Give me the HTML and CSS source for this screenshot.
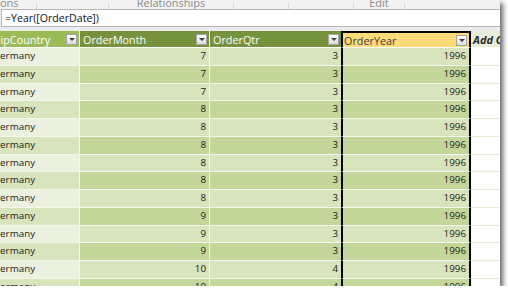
FILE: index.html
```html
<!DOCTYPE html>
<html lang="en">

<head>
    <meta charset="UTF-8">
    <title>PowerPivot - OrderYear</title>
    <link rel="stylesheet" href="styles.css">
</head>

<body>
    <div class="window">
        <div class="ribbon">
            <div class="group g-calc"><span>ons</span></div>
            <div class="group g-blank"></div>
            <div class="group g-rel"><span>Relationships</span></div>
            <div class="group g-blank2"></div>
            <div class="group g-blank3"></div>
            <div class="group g-edit"><span>Edit</span></div>
            <div class="group g-rest"></div>
        </div>

        <div class="formula-row">
            <div class="formula">=Year([OrderDate])</div>
        </div>

        <div class="sheet">
            <div class="row head">
                <div class="cell country"><span>ShipCountry</span><i class="drop"></i></div>
                <div class="cell calc"><span>OrderMonth</span><i class="drop"></i></div>
                <div class="cell calc qtr"><span>OrderQtr</span><i class="drop"></i></div>
                <div class="cell year"><span>OrderYear</span><i class="drop"></i></div>
                <div class="cell add"><span>Add Column</span></div>
            </div>

            <div class="row odd"><div class="cell country">Germany</div><div class="cell num">7</div><div class="cell num qtr">3</div><div class="cell num year">1996</div><div class="cell add"></div></div>
            <div class="row even"><div class="cell country">Germany</div><div class="cell num">7</div><div class="cell num qtr">3</div><div class="cell num year">1996</div><div class="cell add"></div></div>
            <div class="row odd"><div class="cell country">Germany</div><div class="cell num">7</div><div class="cell num qtr">3</div><div class="cell num year">1996</div><div class="cell add"></div></div>
            <div class="row even"><div class="cell country">Germany</div><div class="cell num">8</div><div class="cell num qtr">3</div><div class="cell num year">1996</div><div class="cell add"></div></div>
            <div class="row odd"><div class="cell country">Germany</div><div class="cell num">8</div><div class="cell num qtr">3</div><div class="cell num year">1996</div><div class="cell add"></div></div>
            <div class="row even"><div class="cell country">Germany</div><div class="cell num">8</div><div class="cell num qtr">3</div><div class="cell num year">1996</div><div class="cell add"></div></div>
            <div class="row odd"><div class="cell country">Germany</div><div class="cell num">8</div><div class="cell num qtr">3</div><div class="cell num year">1996</div><div class="cell add"></div></div>
            <div class="row even"><div class="cell country">Germany</div><div class="cell num">8</div><div class="cell num qtr">3</div><div class="cell num year">1996</div><div class="cell add"></div></div>
            <div class="row odd"><div class="cell country">Germany</div><div class="cell num">8</div><div class="cell num qtr">3</div><div class="cell num year">1996</div><div class="cell add"></div></div>
            <div class="row even"><div class="cell country">Germany</div><div class="cell num">9</div><div class="cell num qtr">3</div><div class="cell num year">1996</div><div class="cell add"></div></div>
            <div class="row odd"><div class="cell country">Germany</div><div class="cell num">9</div><div class="cell num qtr">3</div><div class="cell num year">1996</div><div class="cell add"></div></div>
            <div class="row even"><div class="cell country">Germany</div><div class="cell num">9</div><div class="cell num qtr">3</div><div class="cell num year">1996</div><div class="cell add"></div></div>
            <div class="row odd"><div class="cell country">Germany</div><div class="cell num">10</div><div class="cell num qtr">4</div><div class="cell num year">1996</div><div class="cell add"></div></div>
            <div class="row even"><div class="cell country">Germany</div><div class="cell num">10</div><div class="cell num qtr">4</div><div class="cell num year">1996</div><div class="cell add"></div></div>
        </div>
    </div>
</body>

</html>
```

FILE: styles.css
```css
body {
    margin: 0;
    background: #ffffff;
    font-family: 'Open Sans', 'Liberation Sans', sans-serif;
}

.window {
    width: 500px;
    height: 286px;
    overflow: hidden;
    background: #ececec;
    box-shadow: 3px 3px 5px rgba(0, 0, 0, 0.6);
}

/* ribbon group captions, only the lower half shows */
.ribbon {
    display: flex;
    height: 9px;
    overflow: hidden;
    background: #f2f2f2;
}

.group {
    display: flex;
    justify-content: center;
    border-right: 1px solid #d6d6d6;
    height: 6px;
    margin-top: 3px;
}

.group span {
    font-size: 11px;
    line-height: 11px;
    color: #8a8a8a;
    margin-top: -6px;
}

.g-calc {
    width: 36px;
    justify-content: flex-start;
}

.g-blank {
    width: 71px;
}

.g-rel {
    width: 124px;
}

.g-blank2 {
    width: 54px;
}

.g-blank3 {
    width: 64px;
}

.g-edit {
    width: 50px;
}

.g-rest {
    flex: 1;
    border-right: none;
}

.formula-row {
    height: 22px;
    padding-left: 1px;
    box-sizing: border-box;
    background: #ececec;
}

.formula {
    height: 18px;
    box-sizing: border-box;
    background: #ffffff;
    border: 1px solid #b6b6b6;
    border-right: none;
    padding-left: 3px;
    font-size: 10.6px;
    line-height: 16px;
    color: #111111;
}

/* grid */
.sheet {
    margin-left: -14px;
}

.row {
    display: grid;
    grid-template-columns: 94px 130px 131px 130px 50px;
    height: 17.75px;
    font-size: 9.8px;
    color: #1a1a1a;
}

.cell {
    box-sizing: border-box;
    border-right: 1px solid #f4f7ee;
    border-bottom: 1px solid #f4f7ee;
    line-height: 16px;
    white-space: nowrap;
    overflow: hidden;
}

.country {
    padding-left: 7px;
}

.num {
    text-align: right;
    padding-right: 3px;
}

.qtr {
    border-right: none;
}

.year {
    border-left: 2px solid #000000;
    border-right: 2px solid #000000;
}

.odd .country {
    background: #ebf1de;
}

.even .country {
    background: #d8e4bc;
}

.odd .num {
    background: #d8e4bc;
}

.even .num {
    background: #c4d79b;
}

.add {
    background: #ffffff;
    border-right: none;
    border-bottom: 1px solid #e3ebd4;
}

/* header row */
.head {
    height: 17px;
    font-size: 10.8px;
    color: #ffffff;
}

.head .cell {
    display: flex;
    align-items: center;
    justify-content: space-between;
    padding: 0 2px 0 3px;
    line-height: 15px;
    border-bottom: 1px solid #ffffff;
}

.head .country {
    background: #9bbb59;
    padding-left: 2px;
}

.head .calc {
    background: #76923c;
}

.head .year {
    background: #fedb7a;
    color: #3b3b3b;
    border-top: 2px solid #000000;
    padding-left: 1px;
}

.head .add {
    background: #e8eed9;
    color: #2b2b2b;
    font-size: 11px;
    font-weight: bold;
    font-style: italic;
    border-bottom: 1px solid #ffffff;
    padding-left: 2px;
}

.drop {
    width: 11px;
    height: 11px;
    box-sizing: border-box;
    border: 1px solid #a4a4a4;
    background: linear-gradient(#ffffff, #dcdcdc);
    display: flex;
    align-items: center;
    justify-content: center;
    flex: none;
}

.drop::after {
    content: '';
    border-left: 3px solid transparent;
    border-right: 3px solid transparent;
    border-top: 3px solid #3d3d3d;
    margin-top: 1px;
}
```
